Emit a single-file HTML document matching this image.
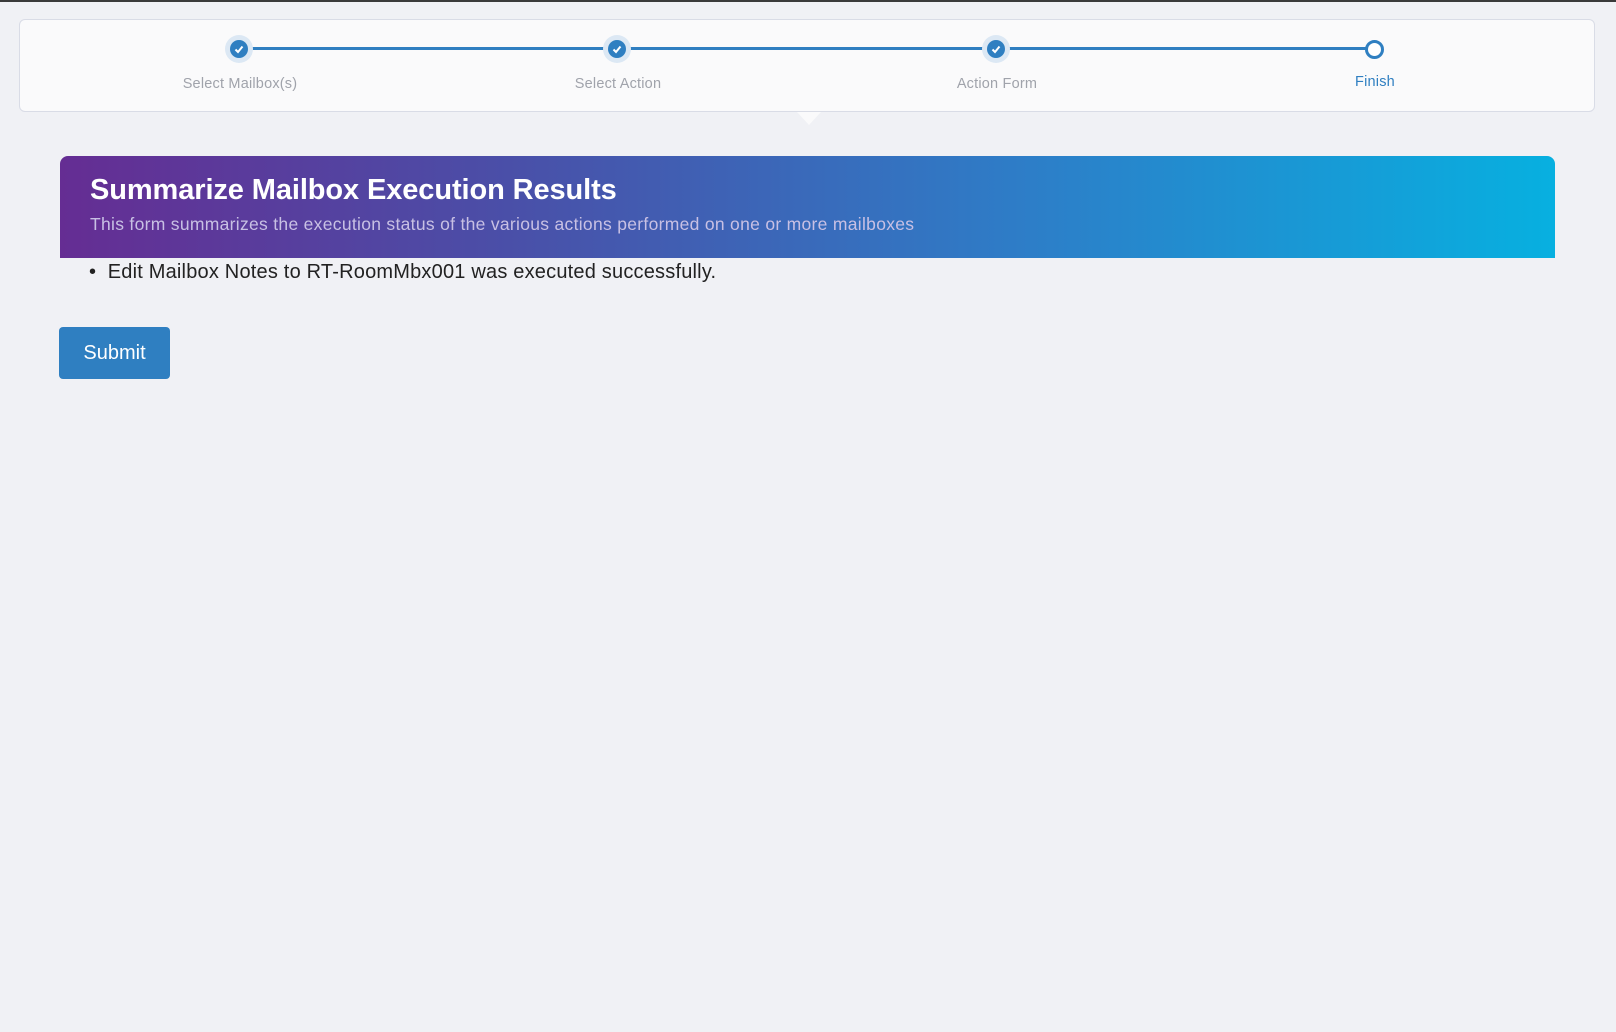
<!DOCTYPE html>
<html><head><style>
html,body{margin:0;padding:0}
body{width:1616px;height:1032px;background:#f0f1f5;font-family:"Liberation Sans",sans-serif;position:relative;overflow:hidden;border-top:2px solid #3a3a3a;box-sizing:border-box}
.card{position:absolute;left:19px;top:17px;width:1576px;height:93px;background:#fafafb;border:1px solid #d9dce6;border-radius:6px;box-sizing:border-box}
.notch{position:absolute;left:797px;top:110px;width:0;height:0;border-left:12px solid transparent;border-right:12px solid transparent;border-top:13px solid #fafafb}
.line{position:absolute;left:239px;top:45px;width:1135px;height:3px;background:#2f7fc1}
.dot{position:absolute;width:28px;height:28px;border-radius:50%;background:#dce8f4;top:33px}
.dot::after{content:"";position:absolute;left:5px;top:5px;width:18px;height:18px;border-radius:50%;background:#2f7fc1}
.dot svg{position:absolute;left:8px;top:8px;z-index:2}
.fin{position:absolute;left:1365px;top:38px;width:13px;height:13px;border:3px solid #2f7fc1;border-radius:50%;background:#fff}
.lbl{position:absolute;top:74px;width:200px;text-align:center;font-size:14.5px;color:#a0a3ab;letter-spacing:0.2px}
.banner{position:absolute;left:60px;top:154px;width:1495px;height:102px;border-radius:8px 8px 0 0;background:linear-gradient(90deg,#652d93 0%,#4a4fa8 30%,#2d7ec8 65%,#07b0e0 100%)}
.banner h1{margin:0;position:absolute;left:30px;top:18px;font-size:29px;color:#fff;font-weight:bold;letter-spacing:-0.1px}
.banner p{margin:0;position:absolute;left:30px;top:58px;font-size:17.5px;color:#c8c0e4;letter-spacing:0.3px}
.item{position:absolute;left:89px;top:259px;font-size:20px;color:#222;letter-spacing:0.2px}
.btn{position:absolute;left:59px;top:325px;width:111px;height:52px;background:#2f7fc1;border-radius:4px;color:#fff;font-size:20px;text-align:center;line-height:52px}
</style></head><body>
<div class="card">
</div>
<div class="notch"></div>
<div class="line"></div>
<div class="dot" style="left:225px"><svg width="12" height="12" viewBox="0 0 12 12"><path d="M2.5 6.5 L5 9 L9.5 3.5" stroke="#fff" stroke-width="2" fill="none"/></svg></div>
<div class="dot" style="left:603px"><svg width="12" height="12" viewBox="0 0 12 12"><path d="M2.5 6.5 L5 9 L9.5 3.5" stroke="#fff" stroke-width="2" fill="none"/></svg></div>
<div class="dot" style="left:982px"><svg width="12" height="12" viewBox="0 0 12 12"><path d="M2.5 6.5 L5 9 L9.5 3.5" stroke="#fff" stroke-width="2" fill="none"/></svg></div>
<div class="fin"></div>
<div class="lbl" style="left:140px">Select Mailbox(s)</div>
<div class="lbl" style="left:518px">Select Action</div>
<div class="lbl" style="left:897px">Action Form</div>
<div class="lbl" style="left:1275px;top:72px;color:#2f7fc1">Finish</div>
<div class="banner"><h1>Summarize Mailbox Execution Results</h1><p>This form summarizes the execution status of the various actions performed on one or more mailboxes</p></div>
<div class="item">•&nbsp;&nbsp;Edit Mailbox Notes to RT-RoomMbx001 was executed successfully.</div>
<div class="btn">Submit</div>
</body></html>
